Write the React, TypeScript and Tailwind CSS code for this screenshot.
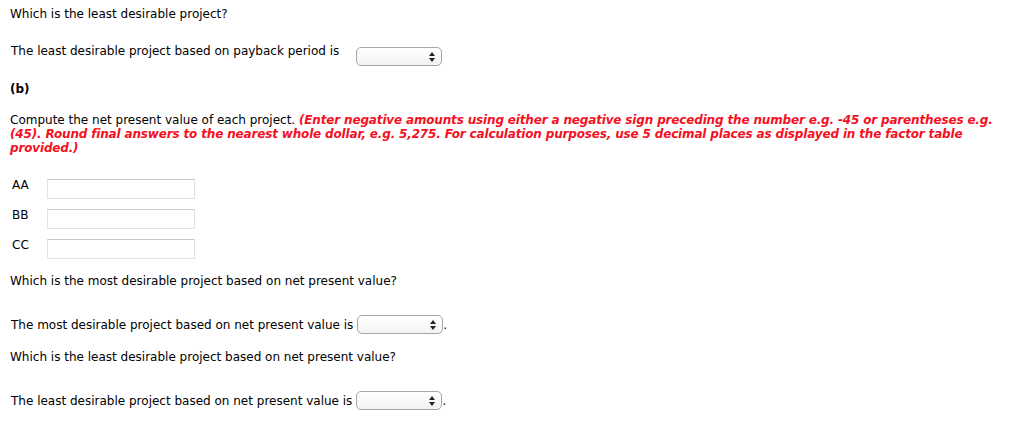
import React from "react";

function SelectBox() {
  return (
    <span className="inline-flex items-center justify-end w-[86px] h-[19px] rounded-[5px] border border-[#a6a6a6] bg-gradient-to-b from-white to-[#f3f3f3] pr-[6px]">
      <svg width="6" height="10" viewBox="0 0 6 10">
        <path d="M3 0 L6 4 L0 4 Z" fill="#222" />
        <path d="M0 6 L6 6 L3 10 Z" fill="#222" />
      </svg>
    </span>
  );
}

function NumberInput() {
  return (
    <div className="w-[148px] h-[20px] mt-[1px] border border-[#e2e2e2] border-t-[#c9c9c9] bg-white" />
  );
}

export default function App() {
  const rows = ["AA", "BB", "CC"];
  return (
    <div className="bg-white text-black text-[12px] leading-[14px] px-[10px] pt-[7px] min-h-[425px]" style={{ fontFamily: '"DejaVu Sans", Verdana, sans-serif' }}>
      <p>Which is the least desirable project?</p>

      <div className="flex items-start mt-[23px] pl-[1px]">
        <span>The least desirable project based on payback period is</span>
        <span className="ml-[17px] mt-[3px] flex"><SelectBox /></span>
      </div>

      <p className="font-bold mt-[16px]">(b)</p>

      <p className="mt-[17px]">
        Compute the net present value of each project.{" "}
        <span className="text-[#f5101f] font-bold italic tracking-[-0.16px]">
          (Enter negative amounts using either a negative sign preceding the number e.g. -45 or parentheses e.g. (45). Round final answers to the nearest whole dollar, e.g. 5,275. For calculation purposes, use 5 decimal places as displayed in the factor table provided.)
        </span>
      </p>

      <div className="flex flex-col gap-[9px] mt-[23px] pl-[2px]">
        {rows.map((r) => (
          <div key={r} className="flex items-start">
            <span className="w-[35px]">{r}</span>
            <NumberInput />
          </div>
        ))}
      </div>

      <p className="mt-[15px]">Which is the most desirable project based on net present value?</p>

      <div className="flex items-center mt-[27px] pl-[1px]">
        <span>The most desirable project based on net present value is</span>
        <span className="ml-[4px] flex"><SelectBox /></span>
        <span>.</span>
      </div>

      <p className="mt-[16px]">Which is the least desirable project based on net present value?</p>

      <div className="flex items-center mt-[27px] pl-[1px]">
        <span>The least desirable project based on net present value is</span>
        <span className="ml-[4px] flex"><SelectBox /></span>
        <span>.</span>
      </div>
    </div>
  );
}
